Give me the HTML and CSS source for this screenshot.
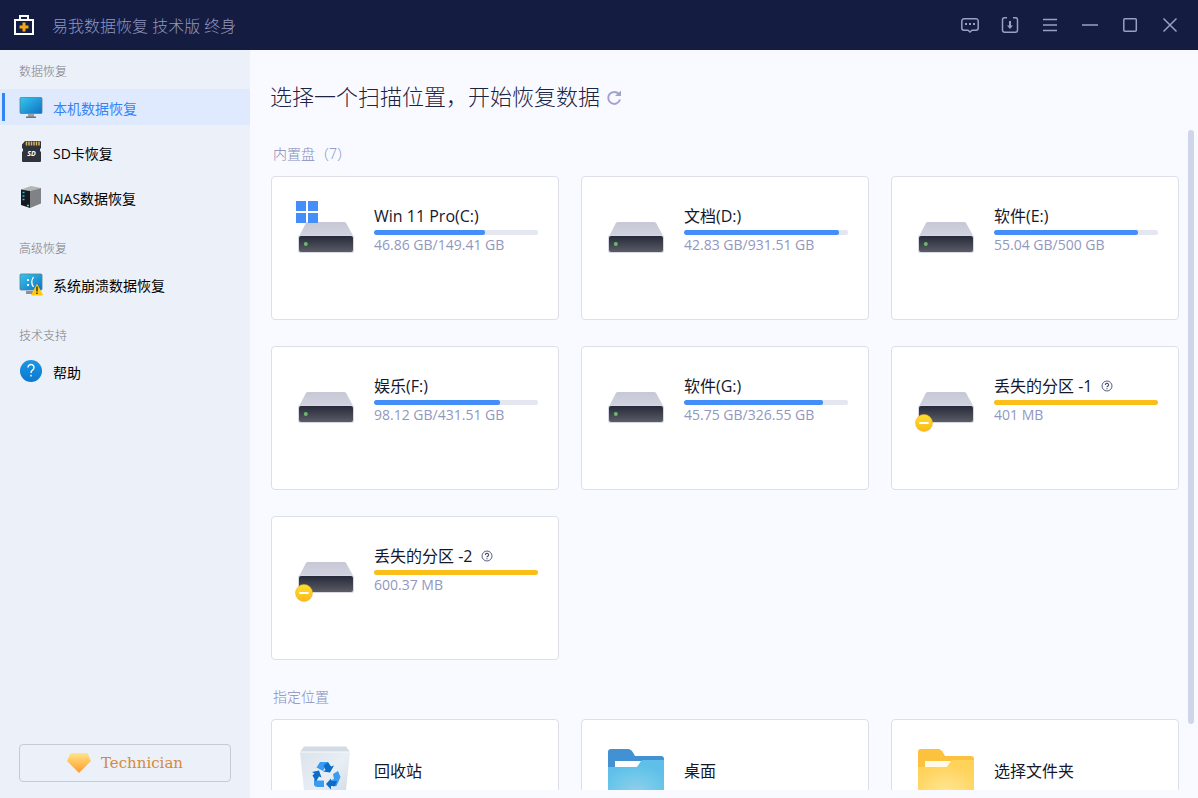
FILE: index.html
```html
<!DOCTYPE html>
<html lang="zh-CN">
<head>
  <meta charset="UTF-8" />
  <meta name="viewport" content="width=device-width, initial-scale=1.0" />
  <title>易我数据恢复</title>
  <link rel="stylesheet" href="styles.css">
</head>
<body>
  <!-- 公用图形 -->
  <svg class="defs" width="0" height="0" aria-hidden="true">
    <defs>
      <linearGradient id="lid" x1="0" y1="0" x2="0" y2="1">
        <stop offset="0" stop-color="#c6c8d5" /><stop offset="1" stop-color="#d0d2e0" />
      </linearGradient>
      <linearGradient id="case" x1="0" y1="0" x2="0" y2="1">
        <stop offset="0" stop-color="#262939" /><stop offset="1" stop-color="#5a5c66" />
      </linearGradient>
      <linearGradient id="gold" x1="0" y1="0" x2="0" y2="1">
        <stop offset="0" stop-color="#ffdf2e" /><stop offset="1" stop-color="#fbb816" />
      </linearGradient>
      <linearGradient id="screen" x1="0" y1="0" x2="1" y2="1">
        <stop offset="0" stop-color="#35c8ee" /><stop offset="1" stop-color="#0f70c4" />
      </linearGradient>
      <linearGradient id="gem" x1="0" y1="0" x2="0" y2="1">
        <stop offset="0" stop-color="#ffe588" /><stop offset="1" stop-color="#ff9a28" />
      </linearGradient>
      <linearGradient id="help" x1="0" y1="0" x2="0" y2="1">
        <stop offset="0" stop-color="#1d96e4" /><stop offset="1" stop-color="#0a78cf" />
      </linearGradient>
      <linearGradient id="bin" x1="0" y1="0" x2="1" y2="1">
        <stop offset="0" stop-color="#dbe3ec" /><stop offset="0.5" stop-color="#e8eef4" /><stop offset="1" stop-color="#ccd7e2" />
      </linearGradient>
      <radialGradient id="blue-front" cx="0.5" cy="0.75" r="0.65">
        <stop offset="0" stop-color="#94cdea" /><stop offset="0.6" stop-color="#6fc8ea" /><stop offset="1" stop-color="#5fbfe9" />
      </radialGradient>
      <radialGradient id="yellow-front" cx="0.5" cy="0.75" r="0.65">
        <stop offset="0" stop-color="#ffe794" /><stop offset="1" stop-color="#ffd25a" />
      </radialGradient>

      <symbol id="drive" viewBox="0 0 64 64">
        <path d="M16 25h36q1.500 0 2.200 1.200L61 38.500H7.500L13.800 26.200Q14.500 25 16 25z" fill="url(#lid)" />
        <rect x="6" y="38" width="56" height="18" rx="2.500" fill="#d6d8e3" />
        <rect x="7" y="39" width="54" height="16" rx="2" fill="url(#case)" />
      </symbol>
      <symbol id="led" viewBox="0 0 64 64">
        <circle cx="13.800" cy="47" r="2" fill="#6bb86d" />
      </symbol>
      <symbol id="lost" viewBox="0 0 64 64" overflow="visible">
        <circle cx="12" cy="56" r="8.500" fill="url(#gold)" stroke="#eba92a" stroke-width="0.500" />
        <rect x="7" y="55" width="10" height="2" rx="1" fill="#fff" />
      </symbol>
      <symbol id="ask" viewBox="0 0 12 12">
        <circle cx="6" cy="6" r="5" fill="none" stroke="#5a6080" />
        <path d="M4.400 4.900a1.600 1.500 0 1 1 2.500 1.200Q6 6.500 6 7.300M6 8.300v1" fill="none" stroke="#4a5070" stroke-width="1.200" />
      </symbol>
    </defs>
  </svg>

  <header class="titlebar">
    <svg class="logo" width="20" height="20" viewBox="0 0 20 20">
      <rect x="1" y="5" width="18" height="14" fill="none" stroke="#fff" stroke-width="2" />
      <path d="M6 4V1h8v3" fill="none" stroke="#fff" stroke-width="2" />
      <path d="M10 7.500v9M5.500 12h9" stroke="#f5a617" stroke-width="3" />
    </svg>
    <span class="app-name">易我数据恢复 技术版 终身</span>
    <div class="window-tools">
      <button type="button" aria-label="反馈">
        <svg width="20" height="20" viewBox="0 0 20 20"><path d="M4 3.800h12a2.200 2.200 0 0 1 2.200 2.200v7a2.200 2.200 0 0 1-2.200 2.200h-4L10 17l-2-1.800H4A2.200 2.200 0 0 1 1.800 13V6A2.200 2.200 0 0 1 4 3.800z" /><path d="M5 9h2M9 9h2M13 9h2" stroke-width="2" /></svg>
      </button>
      <button type="button" aria-label="导入">
        <svg width="20" height="20" viewBox="0 0 20 20"><path d="M7 2.800H4.500a2 2 0 0 0-2 2v10.400a2 2 0 0 0 2 2h11a2 2 0 0 0 2-2V4.800a2 2 0 0 0-2-2H13" /><path d="M10 6v6" stroke-width="2" /><path d="M7 10.500h6L10 14z" fill="#9a9fc8" stroke="none" /></svg>
      </button>
      <button type="button" aria-label="菜单">
        <svg width="20" height="20" viewBox="0 0 20 20"><path d="M3 4.500h14M3 10h14M3 15.500h14" /></svg>
      </button>
      <button type="button" aria-label="最小化">
        <svg width="20" height="20" viewBox="0 0 20 20"><path d="M2 10h16" /></svg>
      </button>
      <button type="button" aria-label="最大化">
        <svg width="20" height="20" viewBox="0 0 20 20"><rect x="3.800" y="3.800" width="12.500" height="12.500" rx="1" /></svg>
      </button>
      <button type="button" aria-label="关闭">
        <svg width="20" height="20" viewBox="0 0 20 20"><path d="M3.500 3.500l13 13M16.500 3.500l-13 13" /></svg>
      </button>
    </div>
  </header>

  <div class="layout">
    <!-- 左侧导航 -->
    <aside class="sidebar">
      <nav>
        <section class="nav-group">
          <h2>数据恢复</h2>
          <a href="#local" class="active">
            <svg width="24" height="24" viewBox="0 0 24 24">
              <rect x="1" y="2.500" width="22" height="16" rx="1" fill="url(#screen)" stroke="#5d7f8c" stroke-width="0.800" />
              <path d="M9 19h6v3H9z" fill="#9aa0a6" /><path d="M7 21.500h10v1.500H7z" fill="#6d7278" />
            </svg>
            <span>本机数据恢复</span>
          </a>
          <a href="#sd">
            <svg width="24" height="24" viewBox="0 0 24 24">
              <path d="M6 1h15q1 0 1 1v6l-1 1v2l1 1v9q0 1-1 1H4q-1 0-1-1v-9l1-1V9L3 8V4.500z" fill="#30323e" />
              <path d="M7.500 1.500v4M10 1.500v4M12.500 1.500v4M15 1.500v4M17.500 1.500v4M20 1.500v4" stroke="#d9b75c" stroke-width="1.500" />
              <text x="12.500" y="16" class="sd-mark">SD</text>
            </svg>
            <span>SD卡恢复</span>
          </a>
          <a href="#nas">
            <svg width="24" height="24" viewBox="0 0 24 24">
              <path d="M2 4.500L12 1l10 2-11 3z" fill="#b4b5b7" />
              <path d="M11 6l11-3v15.500L11 23z" fill="#818285" />
              <path d="M2 4.500L11 6v17l-9-3z" fill="#16191f" />
              <path d="M3.500 7.500h2M3.500 11h2M3.500 14.500h2" stroke="#3bb8d4" stroke-width="1.500" />
              <path d="M8 20.500h2" stroke="#49d3f0" stroke-width="1.500" />
            </svg>
            <span>NAS数据恢复</span>
          </a>
        </section>
        <section class="nav-group">
          <h2>高级恢复</h2>
          <a href="#crash">
            <svg width="24" height="24" viewBox="0 0 24 24">
              <rect x="1" y="2" width="22" height="16" rx="1" fill="url(#screen)" stroke="#5d7f8c" stroke-width="0.800" />
              <path d="M7 19h7v3H7z" fill="#8b9196" />
              <path d="M8 7h2v2H8zM8 12h2v2H8z" fill="#fff" /><path d="M14.500 5q-3.500 5 0 10" fill="none" stroke="#fff" stroke-width="1.300" />
              <path d="M18 12.500L23.500 23h-11z" fill="#ffc914" stroke="#ffc914" stroke-linejoin="round" />
              <path d="M18 14.500v5M18 20.500v1.500" stroke="#3d3108" stroke-width="1.500" />
            </svg>
            <span>系统崩溃数据恢复</span>
          </a>
        </section>
        <section class="nav-group">
          <h2>技术支持</h2>
          <a href="#help">
            <svg width="24" height="24" viewBox="0 0 24 24">
              <circle cx="12" cy="12" r="11" fill="url(#help)" />
              <path d="M9 8.500a3 3 0 1 1 4.500 2.600Q12 12 12 14M12 15.800v1.800" fill="none" stroke="#fff" stroke-width="1.400" />
            </svg>
            <span>帮助</span>
          </a>
        </section>
      </nav>
      <button type="button" class="edition">
        <svg width="24" height="22" viewBox="0 0 24 22"><path d="M3.500 1h17L24 9 12 21 0 9z" fill="url(#gem)" /></svg>
        Technician
      </button>
    </aside>

    <!-- 右侧内容 -->
    <main class="content">
      <div class="heading">
        <h1>选择一个扫描位置，开始恢复数据</h1>
        <button type="button" class="refresh" aria-label="刷新">
          <svg width="16" height="16" viewBox="0 0 16 16">
            <path d="M12.800 4A6 6 0 1 0 14 9.500" fill="none" stroke="#9fa4cd" stroke-width="2" />
            <path d="M9 6h6V0.500z" fill="#9fa4cd" />
          </svg>
        </button>
      </div>

      <div class="viewport">
        <div class="scroll">
          <h3>内置盘（7）</h3>
          <div class="cards">
            <article class="card">
              <svg class="pic" viewBox="0 0 64 64">
                <use href="#drive" /><use href="#led" />
                <path d="M4 4h10v10H4zM16 4h10v10H16zM4 16h10v10H4zM16 16h10v10H16z" fill="#448ef9" />
              </svg>
              <div class="info">
                <div class="name">Win 11 Pro(C:)</div>
                <div class="usage"><span style="width: 67.7%"></span></div>
                <div class="size">46.86 GB/149.41 GB</div>
              </div>
            </article>
            <article class="card">
              <svg class="pic" viewBox="0 0 64 64"><use href="#drive" /><use href="#led" /></svg>
              <div class="info">
                <div class="name">文档(D:)</div>
                <div class="usage"><span style="width: 94.5%"></span></div>
                <div class="size">42.83 GB/931.51 GB</div>
              </div>
            </article>
            <article class="card">
              <svg class="pic" viewBox="0 0 64 64"><use href="#drive" /><use href="#led" /></svg>
              <div class="info">
                <div class="name">软件(E:)</div>
                <div class="usage"><span style="width: 88%"></span></div>
                <div class="size">55.04 GB/500 GB</div>
              </div>
            </article>
            <article class="card">
              <svg class="pic" viewBox="0 0 64 64"><use href="#drive" /><use href="#led" /></svg>
              <div class="info">
                <div class="name">娱乐(F:)</div>
                <div class="usage"><span style="width: 77%"></span></div>
                <div class="size">98.12 GB/431.51 GB</div>
              </div>
            </article>
            <article class="card">
              <svg class="pic" viewBox="0 0 64 64"><use href="#drive" /><use href="#led" /></svg>
              <div class="info">
                <div class="name">软件(G:)</div>
                <div class="usage"><span style="width: 85%"></span></div>
                <div class="size">45.75 GB/326.55 GB</div>
              </div>
            </article>
            <article class="card lost">
              <svg class="pic" viewBox="0 0 64 64"><use href="#drive" /><use href="#lost" /></svg>
              <div class="info">
                <div class="name">丢失的分区 -1 <svg width="12" height="12"><use href="#ask" /></svg></div>
                <div class="usage"><span style="width: 100%"></span></div>
                <div class="size">401 MB</div>
              </div>
            </article>
            <article class="card lost">
              <svg class="pic" viewBox="0 0 64 64"><use href="#drive" /><use href="#lost" /></svg>
              <div class="info">
                <div class="name">丢失的分区 -2 <svg width="12" height="12"><use href="#ask" /></svg></div>
                <div class="usage"><span style="width: 100%"></span></div>
                <div class="size">600.37 MB</div>
              </div>
            </article>
          </div>

          <h3>指定位置</h3>
          <div class="cards">
            <article class="card place">
              <svg class="pic" viewBox="0 0 64 64">
                <path d="M12 6.500h42l4 5.500H8z" fill="#d3dce4" />
                <path d="M8 12h50l-5.500 52h-39z" fill="url(#bin)" />
                <path d="M8 12h50" stroke="#f7fafc" />
                <path d="M28 22h8l-5 9-6.500-3.500z" fill="#3a9cf0" />
                <path d="M36 22l3 4.500 3-1-4 7-7-1 2.500-1.500L31.500 25.500z" fill="#0b6cc9" />
                <path d="M41 34l5-3 2.500 6-4 9-3.500.500-3-6 4-1.500z" fill="#3a9cf0" />
                <path d="M43 46h-4v3.500L34 44l5-5.500V41h6z" fill="#0b6cc9" />
                <path d="M22 39l3 1.500h7V47h-7q-2 0-3-2z" fill="#3a9cf0" />
                <path d="M20 32l7-1.500 2.500 7-2.500-1-3 5-3.500-6 2-2z" fill="#0b6cc9" />
              </svg>
              <div class="name">回收站</div>
            </article>
            <article class="card place">
              <svg class="pic" viewBox="0 0 64 64">
                <path d="M6 12q0-3 3-3h17q3 0 5 3.500l2 3.500h26q3 0 3 3v10H6z" fill="#4291d2" />
                <path d="M13 21h26v8H13z" fill="#fff" />
                <path d="M6 27h28q1 0 2-1.500l3-4.500q1-1 2-1h21v41q0 2-2 2H8q-2 0-2-2z" fill="url(#blue-front)" />
              </svg>
              <div class="name">桌面</div>
            </article>
            <article class="card place">
              <svg class="pic" viewBox="0 0 64 64">
                <path d="M6 12q0-3 3-3h17q3 0 5 3.500l2 3.500h26q3 0 3 3v10H6z" fill="#fcc23d" />
                <path d="M13 21h26v8H13z" fill="#fffbe8" />
                <path d="M6 27h28q1 0 2-1.500l3-4.500q1-1 2-1h21v41q0 2-2 2H8q-2 0-2-2z" fill="url(#yellow-front)" />
              </svg>
              <div class="name">选择文件夹</div>
            </article>
          </div>
        </div>
        <div class="scrollbar"><span></span></div>
      </div>
    </main>
  </div>
</body>
</html>
```
FILE: styles.css
```css
* {
  margin: 0;
  padding: 0;
  box-sizing: border-box;
}

body {
  display: flex;
  flex-direction: column;
  height: 100vh;
  overflow: hidden;
  font-family: "Open Sans", "Noto Sans CJK SC", sans-serif;
  font-size: 14px;
  color: #14182e;
  background-color: #f9faff;
}

button {
  border: none;
  background: none;
  font: inherit;
  cursor: pointer;
}

svg {
  flex-shrink: 0;
}

.defs {
  position: absolute;
}

/* 顶部标题栏 */
.titlebar {
  display: flex;
  align-items: center;
  flex-shrink: 0;
  height: 50px;
  padding: 0 8px 0 14px;
  background-color: #151c42;
}

.app-name {
  margin-left: 18px;
  font-size: 16px;
  font-weight: 300;
  color: #9096bf;
}

.window-tools {
  display: flex;
  margin-left: auto;
}

.window-tools button {
  display: flex;
  align-items: center;
  justify-content: center;
  width: 40px;
  height: 40px;
}

.window-tools svg {
  fill: none;
  stroke: #9a9fc8;
  stroke-width: 1.5;
}

.layout {
  display: flex;
  flex: 1;
  min-height: 0;
}

/* 左侧导航 */
.sidebar {
  display: flex;
  flex-direction: column;
  justify-content: space-between;
  width: 250px;
  padding: 10px 0 16px;
  background-color: #ecf0f9;
}

.sidebar nav {
  display: flex;
  flex-direction: column;
  gap: 22px;
}

.nav-group {
  display: flex;
  flex-direction: column;
  gap: 9px;
}

.nav-group h2 {
  margin-bottom: -4px;
  padding-left: 19px;
  font-size: 12px;
  font-weight: 300;
  line-height: 24px;
  color: #7c7e85;
}

.nav-group a {
  display: flex;
  align-items: center;
  gap: 10px;
  height: 36px;
  padding-left: 19px;
  color: #000;
  text-decoration: none;
}

.nav-group a span {
  padding-top: 2px;
}

.nav-group a.active {
  position: relative;
  color: #3385f5;
  background-color: #e0eaff;
}

.nav-group a.active::before {
  content: "";
  position: absolute;
  left: 2px;
  top: 4px;
  bottom: 4px;
  width: 3px;
  background-color: #3385f5;
}

.sd-mark {
  font-size: 7px;
  font-weight: 700;
  font-style: italic;
  text-anchor: middle;
  fill: #fff;
}

.edition {
  display: flex;
  align-items: center;
  justify-content: center;
  gap: 10px;
  height: 38px;
  margin: 0 19px;
  border: 1px solid #c8cad0;
  border-radius: 4px;
  font-family: "DejaVu Serif", serif;
  font-size: 15px;
  color: #d58a35;
}

/* 右侧内容 */
.content {
  display: flex;
  flex-direction: column;
  flex: 1;
  min-width: 0;
  padding-bottom: 8px;
}

.heading {
  display: flex;
  align-items: center;
  gap: 6px;
  padding: 30px 20px 18px;
}

.heading h1 {
  font-size: 22px;
  font-weight: 300;
  line-height: 32px;
  color: #1d2342;
}

.refresh {
  display: flex;
  padding-top: 4px;
}

.viewport {
  display: flex;
  flex: 1;
  gap: 9px;
  min-height: 0;
  padding-right: 4px;
}

.scroll {
  flex: 1;
  overflow-y: auto;
  padding: 14px 0 0 21px;
  scrollbar-width: none;
}

.scroll h3 {
  padding: 0 2px 12px;
  font-size: 14px;
  font-weight: 300;
  line-height: 20px;
  color: #868cba;
}

.cards {
  display: grid;
  grid-template-columns: repeat(3, 1fr);
  gap: 26px 22px;
  margin-bottom: 27px;
}

.card {
  display: flex;
  align-items: flex-start;
  gap: 18px;
  min-height: 144px;
  padding: 20px;
  border: 1px solid #dcdfea;
  border-radius: 4px;
  background-color: #fff;
}

.pic {
  width: 64px;
  height: 64px;
  overflow: visible;
}

.info {
  flex: 1;
  padding-top: 7px;
}

.name {
  display: flex;
  align-items: center;
  gap: 9px;
  font-size: 16px;
  line-height: 24px;
}

.place .name {
  height: 62px;
}

.usage {
  height: 5px;
  margin-top: 2px;
  border-radius: 2px;
  background-color: #e4e7f0;
  overflow: hidden;
}

.usage span {
  display: block;
  height: 100%;
  border-radius: 2px;
  background-color: #448ef9;
}

.lost .usage span {
  background-color: #fcbf19;
}

.size {
  font-size: 14px;
  line-height: 20px;
  color: #9297c0;
}

.scrollbar {
  width: 6px;
}

.scrollbar span {
  display: block;
  height: 90%;
  border-radius: 3px;
  background-color: #d0d6ea;
}
```
